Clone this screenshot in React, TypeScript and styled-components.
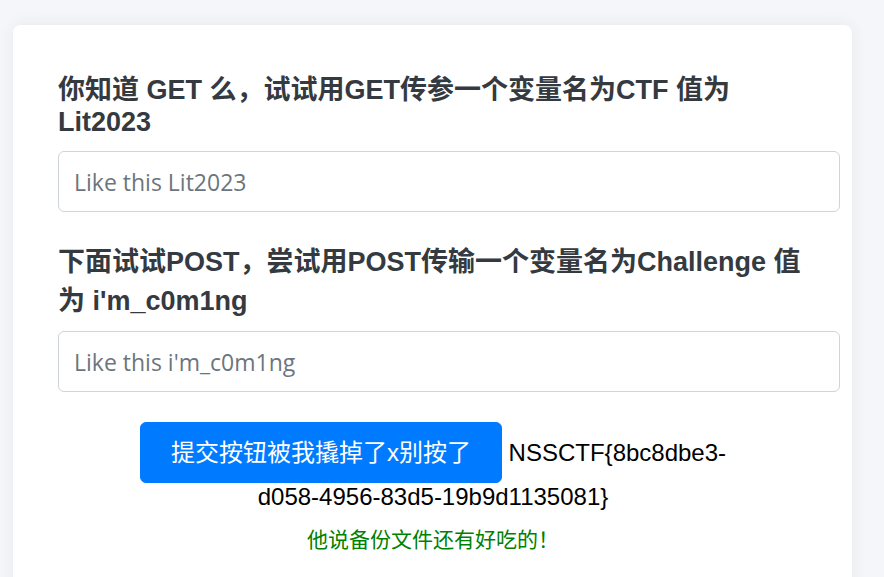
import React from 'react';
import styled, { createGlobalStyle } from 'styled-components';

const GlobalStyle = createGlobalStyle`
  html, body {
    margin: 0;
    padding: 0;
    background: #f5f6f9;
  }
  body {
    font-family: "Liberation Sans", "Noto Sans CJK SC", sans-serif;
    overflow: hidden;
  }
`;

const Page = styled.div`
  padding: 25px 32px 0 13px;
`;

const Card = styled.div`
  background: #fff;
  border-radius: 8px;
  box-shadow: 0 0 16px rgba(40, 50, 70, 0.07);
  padding: 43px 44px 60px 45px;
`;

const FormGroup = styled.div`
  margin-bottom: 28px;
`;

const Label = styled.h2`
  margin: 0 0 13px;
  font-size: 27px;
  font-weight: 700;
  line-height: normal;
  color: #343a40;
`;

const Input = styled.input`
  display: block;
  box-sizing: border-box;
  width: calc(100% + 32px);
  height: 61px;
  padding: 0 15px;
  border: 1px solid #ced4da;
  border-radius: 6px;
  background: #fff;
  font-family: "Open Sans", "Noto Sans CJK SC", sans-serif;
  font-size: 23px;
  color: #495057;
  outline: none;

  &::placeholder {
    color: #6c757d;
  }
`;

const SubmitRow = styled.div`
  max-width: 600px;
  margin: 30px auto 0;
  text-align: center;
  font-size: 24px;
  line-height: normal;
  color: #000;
`;

const Button = styled.button`
  display: inline-block;
  vertical-align: baseline;
  padding: 12px 30px;
  border: 1px solid #007bff;
  border-radius: 6px;
  background: #007bff;
  color: #fff;
  font-family: "Liberation Sans", "Noto Sans CJK SC", sans-serif;
  font-size: 24px;
  line-height: 35px;
  cursor: pointer;
`;

const Hint = styled.p`
  margin: 12px 0 0;
  text-align: center;
  font-size: 21px;
  line-height: normal;
  color: #008000;
`;

const fields = [
  {
    label: '你知道 GET 么，试试用GET传参一个变量名为CTF 值为 Lit2023',
    name: 'CTF',
    placeholder: 'Like this Lit2023',
  },
  {
    label: '下面试试POST，尝试用POST传输一个变量名为Challenge 值为 i\'m_c0m1ng',
    name: 'Challenge',
    placeholder: 'Like this i\'m_c0m1ng',
  },
];

const App = () => {
  return (
    <Page>
      <GlobalStyle />
      <Card>
        {fields.map((f) => (
          <FormGroup key={f.name}>
            <Label>{f.label}</Label>
            <Input name={f.name} placeholder={f.placeholder} />
          </FormGroup>
        ))}
        <SubmitRow>
          <Button type="button">提交按钮被我撬掉了x别按了</Button> NSSCTF{'{'}8bc8dbe3-d058-4956-83d5-19b9d1135081{'}'}
        </SubmitRow>
        <Hint>他说备份文件还有好吃的！</Hint>
      </Card>
    </Page>
  );
};

export default App;
